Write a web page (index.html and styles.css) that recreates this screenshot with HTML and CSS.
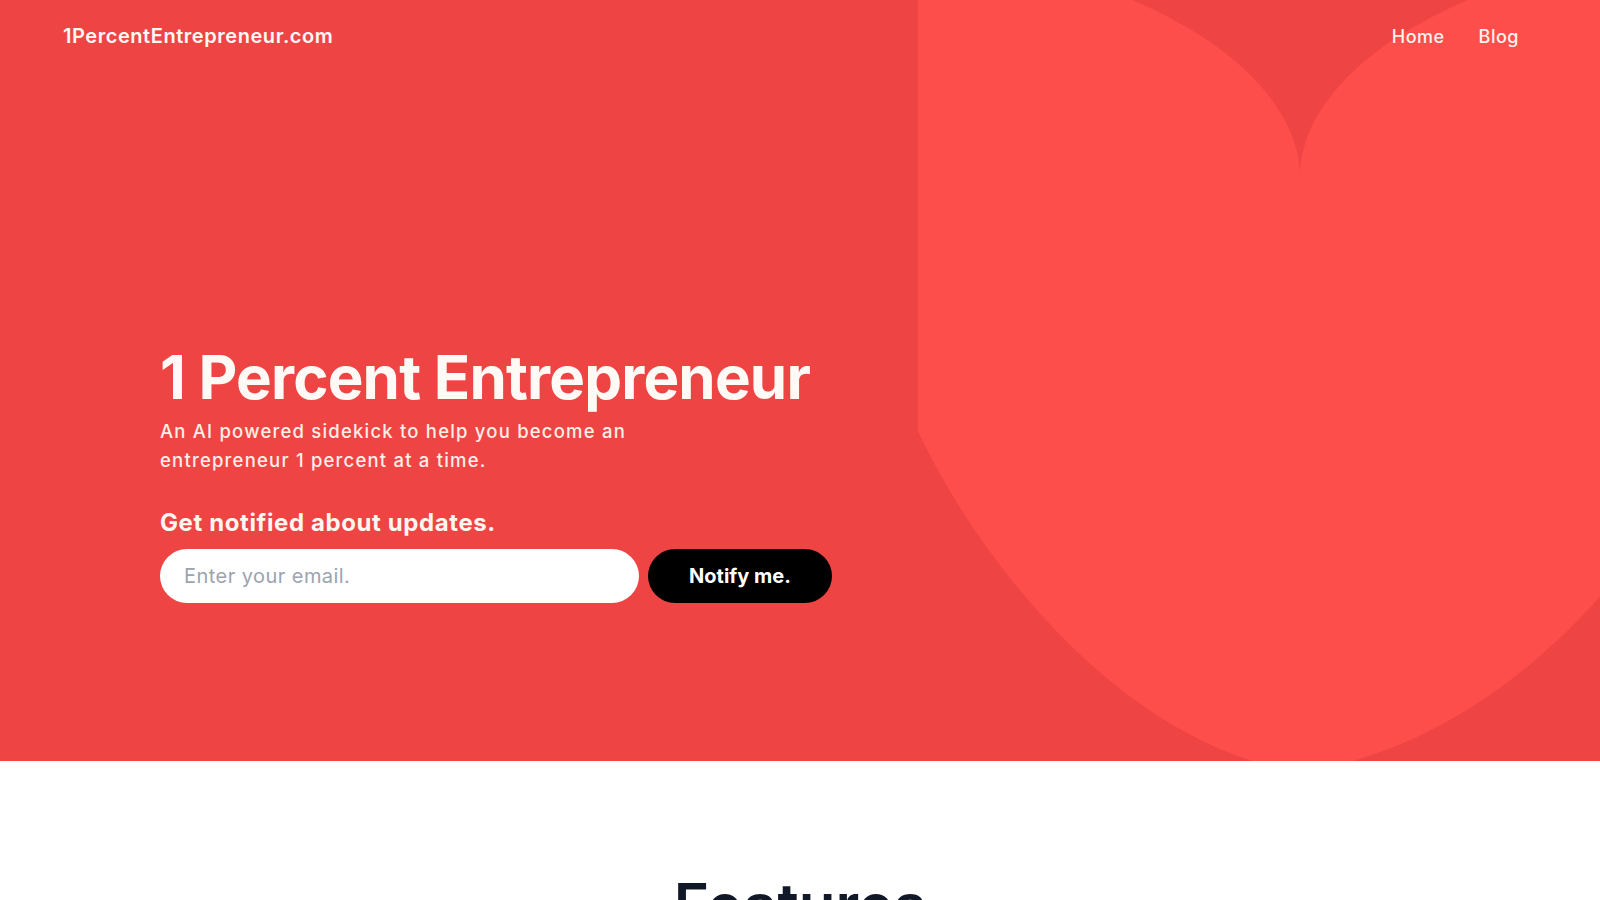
FILE: index.html
```html
<!DOCTYPE html>
<html lang="en">
<head>
<meta charset="utf-8">
<title>1 Percent Entrepreneur</title>
<link rel="stylesheet" href="styles.css">
</head>
<body>
<section class="hero">
  <header class="topbar">
    <a class="logo" href="#">1PercentEntrepreneur.com</a>
    <nav class="nav">
      <a href="#">Home</a>
      <a href="#">Blog</a>
    </nav>
  </header>
  <div class="hero-content">
    <h1 class="title">1 Percent Entrepreneur</h1>
    <p class="subtitle">An AI powered sidekick to help you become an<br>entrepreneur 1 percent at a time.</p>
    <h2 class="notify-label">Get notified about updates.</h2>
    <form class="notify-form">
      <input class="email" type="email" placeholder="Enter your email.">
      <button class="notify-btn" type="button">Notify me.</button>
    </form>
  </div>
  <div class="art">
    <svg class="heart" viewBox="918 0 682 761" preserveAspectRatio="none" aria-hidden="true">
      <path d="M1300 177 C1300 100 1215 10 1010 -40 C880 -70 850 60 872 285 C890 450 1080 740 1300 772 C1540 740 1735 470 1745 290 C1760 60 1720 -70 1590 -40 C1385 10 1300 100 1300 177 Z" fill="#fe4e4b"/>
    </svg>
  </div>
</section>
<section class="features">
  <h2 class="features-title">Features</h2>
</section>
</body>
</html>
```
FILE: styles.css
```css
* { box-sizing: border-box; }
html, body { margin: 0; padding: 0; }
body {
  font-family: "Inter", "Open Sans", sans-serif;
  background: #ffffff;
  color: #111827;
  overflow: hidden;
}
a { text-decoration: none; color: inherit; }

.hero {
  display: grid;
  grid-template-columns: 918px 1fr;
  grid-template-rows: 72px 1fr;
  height: 761px;
  background: #ef4444;
}

.topbar {
  grid-column: 1 / -1;
  grid-row: 1;
  z-index: 2;
  display: flex;
  align-items: center;
  justify-content: space-between;
  padding: 0 81px 0 63px;
}
.logo {
  font-size: 20px;
  font-weight: 600;
  letter-spacing: 0.55px;
  color: #fff8f4;
}
.nav {
  display: flex;
  gap: 34px;
}
.nav a {
  font-size: 18px;
  font-weight: 500;
  letter-spacing: 0.5px;
  color: #fff3ee;
}

.art {
  grid-column: 2;
  grid-row: 1 / -1;
  overflow: hidden;
  z-index: 1;
}
.heart {
  display: block;
  width: 100%;
  height: 100%;
}

.hero-content {
  grid-column: 1;
  grid-row: 2;
  padding: 275px 0 0 160px;
  display: flex;
  flex-direction: column;
  align-items: flex-start;
}
.title {
  margin: 0;
  font-size: 60px;
  line-height: 1;
  font-weight: 700;
  letter-spacing: -0.8px;
  color: #fffaf6;
}
.subtitle {
  margin: 10px 0 0;
  font-size: 18.5px;
  line-height: 29px;
  font-weight: 500;
  letter-spacing: 1.2px;
  color: #fdeee6;
}
.notify-label {
  margin: 32px 0 0;
  font-size: 24px;
  line-height: 32px;
  font-weight: 700;
  letter-spacing: 0.6px;
  color: #fff6f0;
}
.notify-form {
  margin: 10px 0 0;
  display: flex;
  gap: 9px;
}
.email {
  width: 479px;
  height: 54px;
  border: none;
  border-radius: 999px;
  background: #ffffff;
  padding: 0 24px;
  font-family: inherit;
  font-size: 20px;
  letter-spacing: 0.45px;
  color: #111827;
  outline: none;
}
.email::placeholder { color: #9ca3af; }
.notify-btn {
  width: 184px;
  height: 54px;
  border: none;
  border-radius: 999px;
  background: #000000;
  color: #ffffff;
  font-family: inherit;
  font-size: 20px;
  font-weight: 700;
  cursor: pointer;
}

.features {
  padding: 114px 0 0;
  text-align: center;
}
.features-title {
  margin: 0;
  font-size: 60px;
  line-height: 1;
  font-weight: 600;
  color: #111827;
}
```
